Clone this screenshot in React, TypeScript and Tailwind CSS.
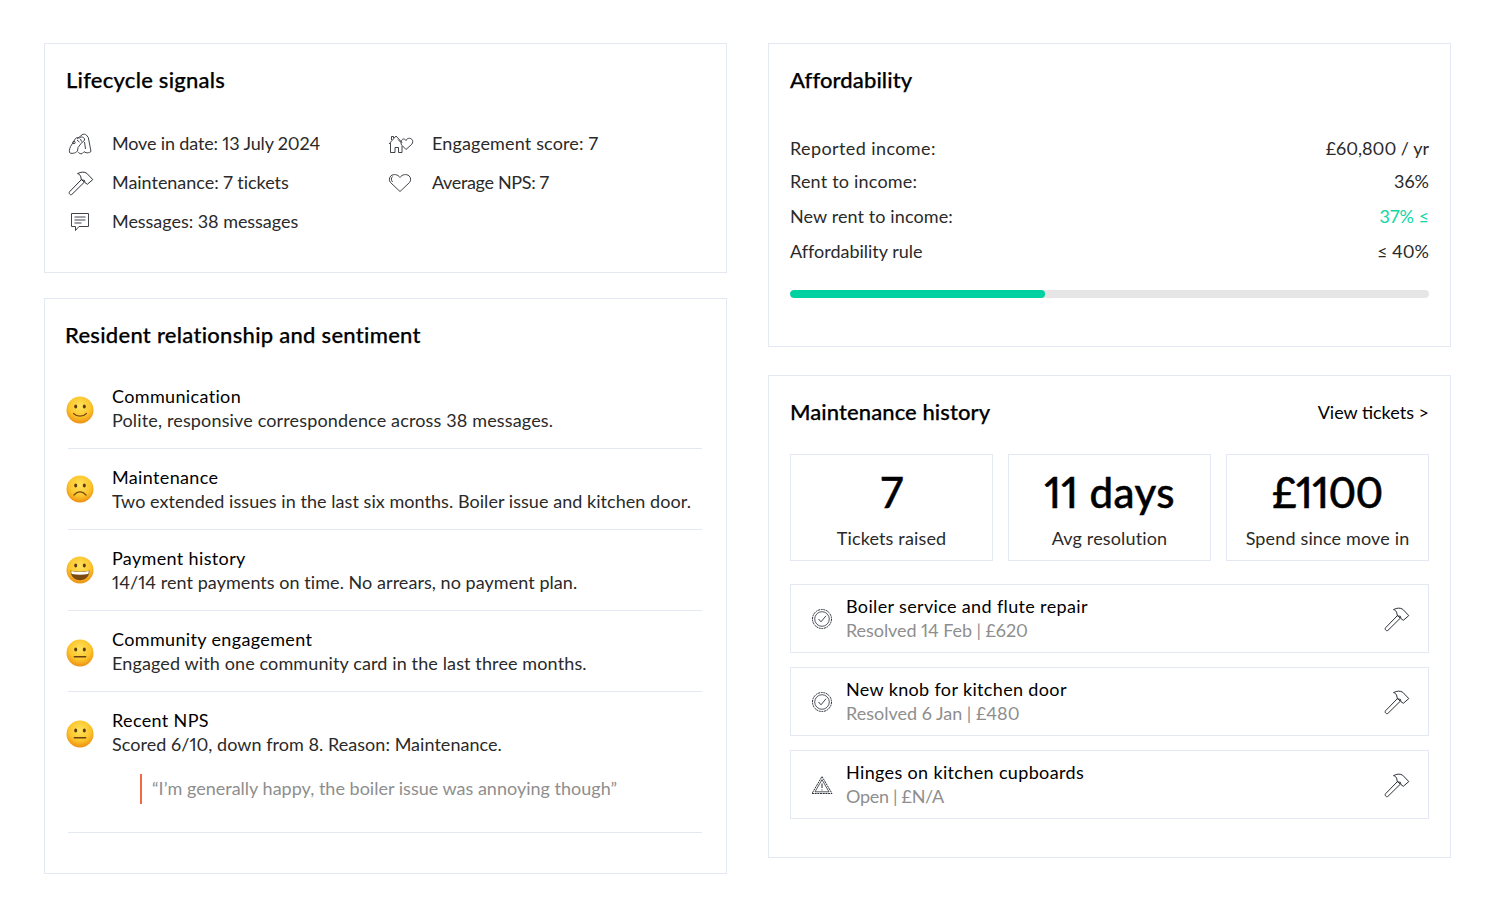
const font = "[font-family:Lato,'Noto_Sans',sans-serif]";
const titleCls = "text-[22px] font-medium leading-[28px] text-black [-webkit-text-stroke:0.25px_#000]";

function Emoji({ kind }: { kind: "smile" | "sad" | "grin" | "neutral" }) {
  const id = "g-" + kind;
  return (
    <svg width="28" height="28" viewBox="0 0 28 28" className="block shrink-0">
      <defs>
        <radialGradient id={id} cx="50%" cy="36%" r="66%">
          <stop offset="0%" stopColor="#ffe35c" />
          <stop offset="60%" stopColor="#fcc52c" />
          <stop offset="100%" stopColor="#ec8a10" />
        </radialGradient>
      </defs>
      <circle cx="14" cy="14" r="13.500" fill={`url(#${id})`} />
      {kind !== "grin" && (
        <>
          <ellipse cx="9.700" cy="10.500" rx="1.500" ry="2" fill="#5f3a10" />
          <ellipse cx="18.300" cy="10.500" rx="1.500" ry="2" fill="#5f3a10" />
        </>
      )}
      {kind === "smile" && <path d="M7.500 17.500c3.500 3.600 9.500 3.600 13 0" fill="none" stroke="#7a4a12" strokeWidth="1.200" strokeLinecap="round" />}
      {kind === "sad" && <path d="M8 20c3.500-4.200 8.500-4.200 12 0" fill="none" stroke="#7a4a12" strokeWidth="1.200" strokeLinecap="round" />}
      {kind === "neutral" && <path d="M8.300 17.700h11.400" fill="none" stroke="#6b4010" strokeWidth="1.400" strokeLinecap="round" />}
      {kind === "grin" && (
        <>
          <ellipse cx="9.700" cy="9.500" rx="1.500" ry="2" fill="#5f3a10" />
          <ellipse cx="18.300" cy="9.500" rx="1.500" ry="2" fill="#5f3a10" />
          <path d="M4.500 14.500c5.800 1.500 13.200 1.500 19 0 0 5.800-4 9.800-9.500 9.800s-9.500-4-9.500-9.800z" fill="#7a4a12" />
          <path d="M5.200 15c5.500 1.300 12 1.300 17.600 0 0 1.300-.2 2.300-.6 3.100-5.200 1-11.200 1-16.400 0-.4-.8-.6-1.800-.6-3.100z" fill="#fff" />
        </>
      )}
    </svg>
  );
}

function Hammer({ size = 26 }: { size?: number }) {
  return (
    <svg width={size} height={size} viewBox="0 0 26 26" fill="none" stroke="#2c3038" strokeWidth="1" strokeLinejoin="round" className="block shrink-0">
      <path d="M1.500 21.800l12-12.300 2.800 2.700L4 24.300c-.7.600-1.600.5-2.200-.1-.7-.7-.8-1.700-.3-2.400z" />
      <path d="M9.500 3.600c3.800-1.900 6.800-1.900 9.300-.3l6 6.300-5.500 4.700-2.300-1.700-.6-2.300-3-.4-.8-3.800c-.8-1.500-1.900-2.200-3.100-2.500z" />
    </svg>
  );
}

function MoveIcon() {
  return (
    <svg width="24" height="22" viewBox="0 0 24 22" fill="none" stroke="#2c3038" strokeWidth="0.9" strokeLinejoin="round" className="block">
      <path d="M9 6l5-4.200c1.500-.9 3.300-.8 4.300.2l2 2.500L23 18.500c-1.700 1.300-3.400 1.500-5 1.200l-2-1-2 2c-1.600.3-3-.3-3.700-1.500" />
      <path d="M11.500 5c1.800-1.700 4.500-1 5 1 .2 1.500-.7 2.700-2.500 3.300L10 14.500l-.5 3.500c-1.800 2.500-6.800 3-8 1.500-.6-2 .6-5.800 2-7.500l4-6.500c1-1 2.500-1.300 4-.5z" />
      <circle cx="6" cy="9.500" r="1.200" />
      <path d="M9 7l2.500 2.200M13.500 8.500L12.500 6M16.500 9l1 7" />
    </svg>
  );
}

function HomeHeart() {
  return (
    <svg width="26" height="20" viewBox="0 0 26 20" fill="none" stroke="#2c3038" strokeWidth="0.9" strokeLinejoin="round" className="block">
      <path d="M1 10L8 2l6 6.500" />
      <path d="M2.500 9V18.500H7V13.500H10.500V18.500H14V12" />
      <path d="M3.500 6V2.500H5.500V4" />
      <path d="M10 5.500l3 3" />
      <path d="M13.500 6.500c1-2 3.500-2 4.500 0 1-2.500 4-2.800 5.700-1.300 1.500 1.500 1.300 3.500.1 5L18 15.500l-4.200-4.300c-1-1.300-1-3.200-.3-4.700z" />
    </svg>
  );
}

function Heart() {
  return (
    <svg width="24" height="20" viewBox="0 0 24 20" fill="none" stroke="#2c3038" strokeWidth="0.9" strokeLinejoin="round" className="block">
      <path d="M12 18.500L2.500 9.500C.8 7.500 1 4.500 3 2.800 5.500.8 9.800 1.200 12 4.500c2.200-3.300 6.500-3.700 9-1.700 2 1.700 2.200 4.700.5 6.700z" />
      <path d="M4.500 9C3 7 3 5 4.500 3.500" />
    </svg>
  );
}

function Chat() {
  return (
    <svg width="20" height="20" viewBox="0 0 20 20" fill="none" stroke="#2c3038" strokeWidth="0.9" strokeLinejoin="round" className="ml-[2px] block">
      <path d="M1.500 1.500H18.500V14.500H9L5.500 18.500V14.500H1.500Z" />
      <path d="M4.500 5H15.500M4.500 8H15.500M4.500 11H11.500" />
    </svg>
  );
}

function Check() {
  return (
    <svg width="22" height="22" viewBox="0 0 22 22" fill="none" stroke="#2c3038" className="block">
      <circle cx="11" cy="11" r="9.500" strokeWidth="1" strokeDasharray="2 0.700" />
      <circle cx="11" cy="11" r="7.300" strokeWidth="0.8" />
      <path d="M7.500 11l2.500 2.800 5-6" strokeWidth="0.9" />
    </svg>
  );
}

function Warn() {
  return (
    <svg width="22" height="20" viewBox="0 0 22 20" fill="none" stroke="#2c3038" className="block">
      <path d="M11 1.500L21 18.500H1Z" strokeWidth="1" strokeDasharray="2 0.700" />
      <path d="M11 4.700L18 16.800H4Z" strokeWidth="0.8" />
      <path d="M11 8.500V13M11 14.500V15.500" strokeWidth="1" />
    </svg>
  );
}

function Signal({ icon, text, tr }: { icon: React.ReactNode; text: string; tr: string }) {
  return (
    <div className="flex h-[39px] items-center">
      <div className="flex w-[46px] shrink-0 items-center pl-[2px]">{icon}</div>
      <span className={`whitespace-nowrap ${tr}`}>{text}</span>
    </div>
  );
}

const rows = [
  { e: "smile", m: "mt-[4px]", tr: "tracking-[0.15px]", t: "Communication", d: "Polite, responsive correspondence across 38 messages." },
  { e: "sad", m: "mt-0", tr: "tracking-[0.05px]", t: "Maintenance", d: "Two extended issues in the last six months. Boiler issue and kitchen door." },
  { e: "grin", m: "mt-0", tr: "tracking-[0.05px]", t: "Payment history", d: "14/14 rent payments on time. No arrears, no payment plan." },
  { e: "neutral", m: "mt-[4px]", tr: "tracking-[0.12px]", t: "Community engagement", d: "Engaged with one community card in the last three months." },
] as const;

function Row({ e, m, tr, t, d }: { e: "smile" | "sad" | "grin" | "neutral"; m: string; tr: string; t: string; d: string }) {
  return (
    <div className="flex h-[81px] items-center border-b border-[#e4e8f3]">
      <div className={`w-[44px] shrink-0 -ml-[2px] pr-[2px] ${m}`}><Emoji kind={e} /></div>
      <div className="leading-[24px] pl-[2px]">
        <div className="tracking-[0.35px] text-black">{t}</div>
        <div className={tr}>{d}</div>
      </div>
    </div>
  );
}

function Ticket({ icon, title, sub, tr }: { icon: React.ReactNode; title: string; sub: string; tr: string }) {
  return (
    <div className="flex h-[69px] items-center border border-[#e4e8f3] pl-[20px] pr-[18px]">
      <div className="w-[35px] shrink-0">{icon}</div>
      <div className="flex-1 leading-[24px] pb-[1px]">
        <div className="tracking-[0.35px] text-black">{title}</div>
        <div className={`text-[#8e8e8e] ${tr}`}>{sub}</div>
      </div>
      <Hammer />
    </div>
  );
}

function Stat({ n, l, tr }: { n: string; l: string; tr: string }) {
  return (
    <div className="flex h-[107px] flex-1 flex-col items-center border border-[#e4e8f3]">
      <div className={`mt-[11px] text-[42px] font-medium leading-[52px] text-black [-webkit-text-stroke:0.5px_#000] ${tr}`}>{n}</div>
      <div className="mt-[8px] leading-[24px]">{l}</div>
    </div>
  );
}

function Aff({ l, r, lt, c }: { l: string; r: React.ReactNode; lt: string; c?: string }) {
  return (
    <div className="flex h-[35px] items-center justify-between">
      <span className={lt}>{l}</span>
      <span className={`tracking-[0px] ${c ?? ""}`}>{r}</span>
    </div>
  );
}

export default function App() {
  return (
    <div className={`${font} flex h-[917px] w-[1496px] gap-[41px] bg-white pl-[44px] pt-[43px] text-[18px] tracking-[0.15px] text-[#2a2a2a] [font-variant-numeric:proportional-nums]`}>
      <div className="flex w-[683px] flex-col gap-[25px]">
        <section className="h-[230px] border border-[#e4e8f3] pl-[21px] pr-[22px] pt-[22px]">
          <h2 className={`${titleCls} tracking-[0.25px]`}>Lifecycle signals</h2>
          <div className="mt-[30px] grid grid-cols-[320px_1fr]">
            <Signal icon={<MoveIcon />} text="Move in date: 13 July 2024" tr="tracking-[-0.15px]" />
            <Signal icon={<HomeHeart />} text="Engagement score: 7" tr="tracking-[0.15px]" />
            <Signal icon={<Hammer />} text="Maintenance: 7 tickets" tr="tracking-[-0.03px]" />
            <Signal icon={<Heart />} text="Average NPS: 7" tr="tracking-[-0.35px]" />
            <Signal icon={<Chat />} text="Messages: 38 messages" tr="tracking-[-0.04px]" />
          </div>
        </section>
        <section className="h-[576px] border border-[#e4e8f3] pl-[20px] pr-[24px] pt-[22px]">
          <h2 className={`${titleCls} tracking-[0.28px]`}>Resident relationship and sentiment</h2>
          <div className="mt-[19px] pl-[3px]">
            {rows.map((r) => (
              <Row key={r.t} e={r.e} m={r.m} tr={r.tr} t={r.t} d={r.d} />
            ))}
            <div className="h-[141px] border-b border-[#e4e8f3] pt-[16px]">
              <div className="flex items-center">
                <div className="w-[44px] shrink-0 -ml-[2px] pr-[2px] mt-[4px]"><Emoji kind="neutral" /></div>
                <div className="leading-[24px] pl-[2px]">
                  <div className="tracking-[0.35px] text-black">Recent NPS</div>
                  <div className="tracking-[0.04px]">Scored 6/10, down from 8. Reason: Maintenance.</div>
                </div>
              </div>
              <div className="ml-[72px] mt-[18px] flex h-[30px] items-center border-l-2 border-[#f26a42] pb-[2px] pl-[10px] tracking-[0.01px] text-[#8e8e8e]">
                “I’m generally happy, the boiler issue was annoying though”
              </div>
            </div>
          </div>
        </section>
      </div>
      <div className="flex w-[683px] flex-col gap-[28px]">
        <section className="h-[304px] border border-[#e4e8f3] px-[21px] pt-[22px]">
          <h2 className={`${titleCls} tracking-[0.1px]`}>Affordability</h2>
          <div className="mt-[35px]">
            <div className="pt-[2px] -mb-[2px]">
              <Aff l="Reported income:" r="£60,800 / yr" lt="tracking-[0.4px]" />
            </div>
            <Aff l="Rent to income:" r="36%" lt="tracking-[0.2px]" />
            <Aff l="New rent to income:" r="37% ≤" lt="tracking-[0.1px]" c="text-[#12d6a5]" />
            <Aff l="Affordability rule" r="≤ 40%" lt="tracking-[-0.02px]" />
          </div>
          <div className="mt-[21px] h-[8px] overflow-hidden rounded-full bg-[#e6e6e6]">
            <div className="h-full w-[255px] rounded-full bg-[#00d1a0]" />
          </div>
        </section>
        <section className="h-[483px] border border-[#e4e8f3] px-[21px] pt-[22px]">
          <div className="flex items-center justify-between">
            <h2 className={`${titleCls} tracking-[0.09px]`}>Maintenance history</h2>
            <span className="tracking-[0px] text-black">View tickets &gt;</span>
          </div>
          <div className="mt-[28px] flex gap-[15px]">
            <Stat n="7" l="Tickets raised" tr="tracking-[-1px]" />
            <Stat n="11 days" l="Avg resolution" tr="tracking-[0.4px]" />
            <Stat n="£1100" l="Spend since move in" tr="tracking-[-0.6px]" />
          </div>
          <div className="mt-[23px] flex flex-col gap-[14px]">
            <Ticket icon={<Check />} title="Boiler service and flute repair" sub="Resolved 14 Feb | £620" tr="tracking-[-0.08px]" />
            <Ticket icon={<Check />} title="New knob for kitchen door" sub="Resolved 6 Jan | £480" tr="tracking-[0px]" />
            <Ticket icon={<Warn />} title="Hinges on kitchen cupboards" sub="Open | £N/A" tr="tracking-[-0.3px]" />
          </div>
        </section>
      </div>
    </div>
  );
}
